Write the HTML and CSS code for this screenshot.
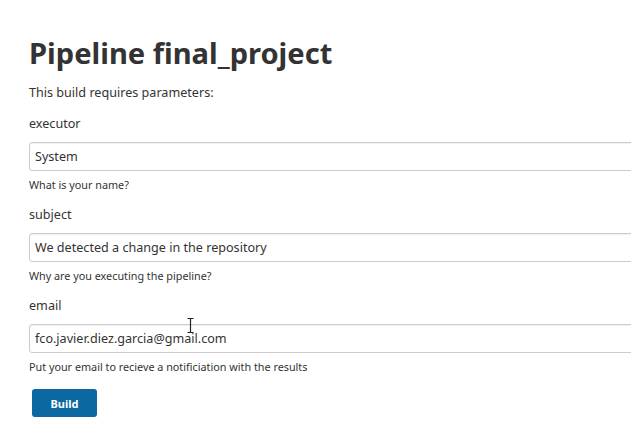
FILE: index.html
```html
<!DOCTYPE html>
<html>
<head>
<meta charset="utf-8">
<link rel="stylesheet" href="styles.css">
</head>
<body>
<main class="page">
  <h1 class="title">Pipeline final_project</h1>
  <p class="intro">This build requires parameters:</p>
  <form class="params">
    <div class="field">
      <label class="label">executor</label>
      <div class="input">System</div>
      <div class="help">What is your name?</div>
    </div>
    <div class="field">
      <label class="label">subject</label>
      <div class="input">We detected a change in the repository</div>
      <div class="help">Why are you executing the pipeline?</div>
    </div>
    <div class="field">
      <label class="label">email</label>
      <div class="input cursor-host">fco.javier.diez.garcia@gmail.com
        <svg class="ibeam" width="7" height="15" viewBox="0 0 7 15"><path d="M0.5 0.5H6.5M3.5 0.5V14.5M0.5 14.5H6.5" stroke="#222" stroke-width="1.2" fill="none"/></svg>
      </div>
      <div class="help">Put your email to recieve a notificiation with the results</div>
    </div>
    <div class="actions">
      <button type="button" class="btn">Build</button>
    </div>
  </form>
</main>
</body>
</html>
```

FILE: styles.css
```css
html, body {
  margin: 0;
  padding: 0;
  background: #fff;
}
body {
  font-family: "Noto Sans", "Open Sans", sans-serif;
  color: #333;
  overflow: hidden;
}
.page {
  padding: 29px 0 0 29px;
  overflow: hidden;
}
.title {
  margin: 0;
  font-size: 29.1px;
  font-weight: 700;
  line-height: 48px;
  color: #333;
}
.intro {
  margin: 6px 0 0 0;
  font-size: 12.6px;
  line-height: 20px;
}
.params {
  display: flex;
  flex-direction: column;
}
.field {
  display: flex;
  flex-direction: column;
}
.label {
  margin: 12px 0 0 0;
  font-size: 12.6px;
  line-height: 20px;
}
.field:first-child .label {
  margin-top: 11px;
}
.input {
  position: relative;
  margin-top: 8px;
  width: 620px;
  height: 29px;
  box-sizing: border-box;
  border: 1px solid #ccc;
  border-radius: 3px;
  box-shadow: inset 0 1px 1px rgba(0,0,0,0.06);
  padding: 0 5px;
  font-size: 12.6px;
  line-height: 27px;
  color: #333;
  white-space: nowrap;
}
.help {
  margin: 6px 0 0 0;
  font-size: 10.8px;
  line-height: 16px;
}
.ibeam {
  position: absolute;
  left: 157px;
  top: -7px;
}
.actions {
  padding: 14px 0 0 3px;
}
.btn {
  width: 65px;
  height: 28px;
  border: none;
  border-radius: 3px;
  background: #0b68a0;
  color: #fff;
  font-family: "Noto Sans", "Open Sans", sans-serif;
  font-size: 11px;
  font-weight: 700;
  padding: 0;
}
```
